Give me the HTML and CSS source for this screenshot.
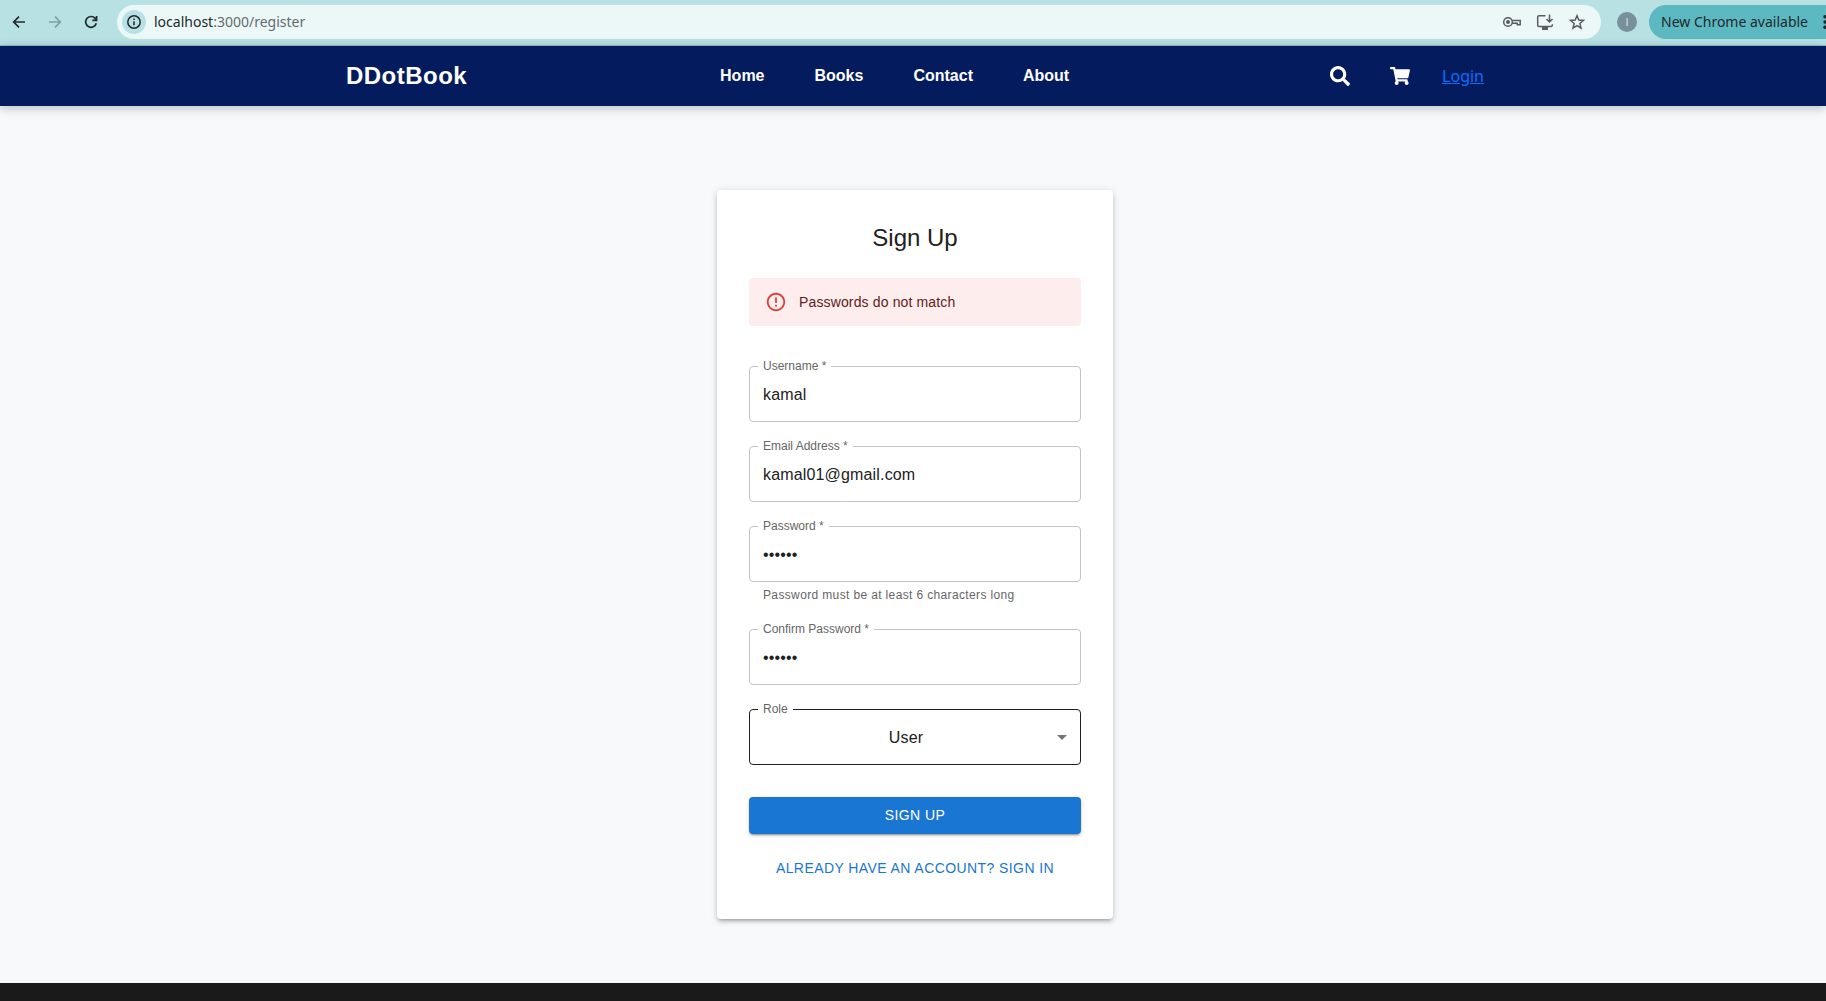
FILE: index.html
```html
<!DOCTYPE html>
<html lang="en">
<head>
<meta charset="utf-8">
<meta name="viewport" content="width=device-width, initial-scale=1">
<title>DDotBook - Sign Up</title>
<link rel="stylesheet" href="styles.css">
</head>
<body>
<div class="toolbar">
  <button class="tool" type="button" aria-label="Back"><svg viewBox="0 0 16 16"><path d="M14 8H3M8 2.700 2.700 8 8 13.300"/></svg></button>
  <button class="tool tool-off" type="button" aria-label="Forward" disabled><svg viewBox="0 0 16 16"><path d="M2 8h11M8 2.700 13.300 8 8 13.300"/></svg></button>
  <button class="tool" type="button" aria-label="Reload"><svg viewBox="0 0 16 16"><path d="M13.300 9.200A5.400 5.400 0 1 1 12 4.200L13.500 5.800M13.600 2v4.300H9.300"/></svg></button>
  <div class="omnibox">
    <button class="site-info" type="button" aria-label="View site information"><svg viewBox="0 0 16 16"><circle cx="8" cy="8" r="6.200"/><path d="M8 7.200v4M8 4.500v1.500"/></svg></button>
    <div class="address" role="textbox" aria-label="Address" tabindex="0">localhost<span class="address-path">:3000/register</span></div>
    <button class="omni-action" type="button" aria-label="Passwords"><svg class="key-icon" viewBox="0 0 20 16"><circle cx="6" cy="8" r="4.300"/><circle class="dot" cx="6" cy="8" r="2"/><path d="M10.200 6.500h8v4.200h-3V9.300h-5"/></svg></button>
    <button class="omni-action" type="button" aria-label="Install app"><svg viewBox="0 0 18 18"><path d="M9.500 2.700H3q-1.300 0-1.300 1.300v8.200q0 1.300 1.300 1.300h12q1.300 0 1.300-1.300v-1M13.500 1.500v7M10.500 6l3 3 3-3"/><path class="dot" d="M6 13.500h6V17H6z"/></svg></button>
    <button class="omni-action" type="button" aria-label="Bookmark"><svg viewBox="0 0 18 18"><path d="m9 2.700 1.800 4.300 4.700.4-3.600 3.100 1.100 4.600L9 12.600l-4 2.500 1.100-4.600-3.600-3.100 4.700-.4z"/></svg></button>
  </div>
  <button class="avatar" type="button">I</button>
  <button class="update" type="button"><span>New Chrome available</span><svg viewBox="0 0 4 16"><circle cx="2" cy="2" r="2"/><circle cx="2" cy="8" r="2"/><circle cx="2" cy="14" r="2"/></svg></button>
</div>

<header class="header">
  <div class="header-inner">
    <a class="logo" href="#">DDotBook</a>
    <nav class="nav">
      <a href="#">Home</a>
      <a href="#">Books</a>
      <a href="#">Contact</a>
      <a href="#">About</a>
    </nav>
    <div class="actions">
      <button class="icon-button" type="button" aria-label="Search"><svg viewBox="0 0 512 512"><path d="M505 442.700L405.300 343c-4.500-4.500-10.600-7-17-7H372c27.600-35.300 44-79.700 44-128C416 93.100 322.900 0 208 0S0 93.100 0 208s93.100 208 208 208c48.300 0 92.700-16.400 128-44v16.300c0 6.400 2.500 12.500 7 17l99.700 99.700c9.400 9.400 24.600 9.400 33.900 0l28.300-28.300c9.400-9.400 9.400-24.600.1-34zM208 336c-70.700 0-128-57.200-128-128 0-70.700 57.200-128 128-128 70.700 0 128 57.200 128 128 0 70.700-57.200 128-128 128z"/></svg></button>
      <button class="icon-button" type="button" aria-label="Cart"><svg viewBox="0 0 576 512"><path d="M528.120 301.319l47.273-208C578.806 78.301 567.391 64 551.990 64H159.208l-9.166-44.810C147.758 8.021 137.930 0 126.529 0H24C10.745 0 0 10.745 0 24v16c0 13.255 10.745 24 24 24h69.883l70.248 343.435C147.325 417.100 136 435.222 136 456c0 30.928 25.072 56 56 56s56-25.072 56-56c0-15.674-6.447-29.835-16.824-40h209.647C430.447 426.165 424 440.326 424 456c0 30.928 25.072 56 56 56s56-25.072 56-56c0-22.172-12.888-41.332-31.579-50.405l5.517-24.276c3.413-15.018-8.002-29.319-23.403-29.319H218.117l-6.545-32h293.145c11.206 0 20.920-7.754 23.403-18.681z"/></svg></button>
      <a class="login" href="#">Login</a>
    </div>
  </div>
</header>

<main class="page">
  <form class="card">
    <h1 class="title">Sign Up</h1>
    <div class="alert" role="alert">
      <svg viewBox="0 0 24 24"><path d="M11 15h2v2h-2zm0-8h2v6h-2zm.99-5C6.470 2 2 6.480 2 12s4.470 10 9.990 10C17.520 22 22 17.520 22 12S17.520 2 11.990 2zM12 20c-4.420 0-8-3.580-8-8s3.580-8 8-8 8 3.580 8 8-3.580 8-8 8z"/></svg>
      <span>Passwords do not match</span>
    </div>
    <div class="fields">
      <div class="field">
        <label for="username">Username *</label>
        <input id="username" type="text" value="kamal">
      </div>
      <div class="field">
        <label for="email">Email Address *</label>
        <input id="email" type="email" value="kamal01@gmail.com">
      </div>
      <div class="field">
        <label for="password">Password *</label>
        <input id="password" type="password" value="secret" aria-describedby="password-help">
        <p class="help" id="password-help">Password must be at least 6 characters long</p>
      </div>
      <div class="field">
        <label for="confirm">Confirm Password *</label>
        <input id="confirm" type="password" value="sesame">
      </div>
      <div class="field">
        <label for="role">Role</label>
        <select id="role"><option>User</option></select>
        <svg class="arrow" viewBox="0 0 24 24"><path d="M7 10l5 5 5-5z"/></svg>
      </div>
    </div>
    <button class="submit" type="submit">SIGN UP</button>
    <a class="signin" href="#">ALREADY HAVE AN ACCOUNT? SIGN IN</a>
  </form>
</main>
<footer class="footer"></footer>
</body>
</html>
```
FILE: styles.css
```css
* { box-sizing: border-box; }

body {
  margin: 0;
  min-height: 100vh;
  display: flex;
  flex-direction: column;
  overflow-x: hidden;
  background: #f8f9fb;
  color: #212121;
  font-family: "Liberation Sans", Arial, sans-serif;
}

button { border: 0; padding: 0; background: none; font: inherit; color: inherit; cursor: pointer; }
svg { display: block; }

/* Browser toolbar */
.toolbar {
  display: flex;
  align-items: center;
  height: 46px;
  padding: 0 0 2px 8px;
  overflow: hidden;
  background: #b8e1e4;
  border-bottom: 1px solid #92bfc3;
  font-family: "Noto Sans", sans-serif;
  font-size: 14px;
  color: #22282b;
}
.tool { flex: none; width: 22px; margin-right: 14px; }
.tool svg, .site-info svg { width: 16px; height: 16px; margin: 0 auto; }
.toolbar svg { fill: none; stroke: currentColor; stroke-width: 1.700; }
.toolbar .dot { fill: currentColor; stroke: none; }
.tool-off { color: #7e9fa3; }
.omnibox {
  flex: 1;
  display: flex;
  align-items: center;
  height: 34px;
  margin: 0 16px 0 1px;
  padding: 0 15px 0 5px;
  border-radius: 17px;
  background: #ecf8f8;
}
.site-info { width: 24px; height: 24px; border-radius: 50%; background: #b8e1e4; }
.toolbar .site-info svg { stroke-width: 1.500; }
.address { flex: 1; margin-left: 8px; }
.address-path { color: #646b6d; }
.omni-action { margin-left: 14px; color: #565d5f; }
.omni-action svg { width: 18px; height: 18px; stroke-width: 1.500; }
.omni-action .key-icon { width: 20px; height: 16px; }
.avatar {
  flex: none;
  width: 20px;
  height: 20px;
  margin-right: 12px;
  border-radius: 50%;
  background: #78909c;
  color: #dfe6e9;
  font-family: "Open Sans", sans-serif;
  font-size: 11px;
  line-height: 20px;
}
.update {
  flex: none;
  display: flex;
  align-items: center;
  justify-content: space-between;
  width: 178px;
  height: 34px;
  margin-right: -1px;
  padding-left: 12px;
  border-radius: 17px 0 0 17px;
  background: #5cb9c1;
  white-space: nowrap;
}
.update svg { width: 4px; height: 14px; fill: currentColor; stroke: none; }

/* Site header */
.header {
  position: relative;
  padding-left: 4px;
  background: #041b5d;
  box-shadow: 0 2px 10px rgba(0, 0, 0, 0.25);
}
.header-inner {
  display: flex;
  align-items: center;
  justify-content: space-between;
  max-width: 1138px;
  height: 60px;
  margin: 0 auto;
  color: #fff;
}
.logo { color: #fff; font-size: 24px; font-weight: 700; letter-spacing: 0.02em; text-decoration: none; }
.nav { display: flex; gap: 50px; }
.nav a { color: #fff; font-weight: 700; text-decoration: none; }
.actions { display: flex; align-items: center; gap: 24px; }
.icon-button { padding: 8px; }
.icon-button svg { width: 20px; height: 20px; fill: currentColor; }
.login { color: #0d6efd; font-family: "Noto Sans", sans-serif; font-size: 16px; }

/* Sign-up card */
.page { display: flex; justify-content: center; padding: 84px 0 64px 4px; }
.card {
  display: flex;
  flex-direction: column;
  width: 396px;
  padding: 32px;
  border-radius: 4px;
  background: #fff;
  box-shadow: 0 3px 3px -2px rgba(0, 0, 0, 0.2), 0 3px 4px rgba(0, 0, 0, 0.14), 0 1px 8px rgba(0, 0, 0, 0.12);
}
.title { margin: 0 0 24px; font-size: 24px; font-weight: 400; line-height: 32px; text-align: center; }
.alert {
  display: flex;
  align-items: center;
  gap: 12px;
  height: 48px;
  margin-bottom: 40px;
  padding: 0 16px;
  border-radius: 4px;
  background: #fdeded;
  color: #5f2120;
  font-size: 14px;
  letter-spacing: 0.01em;
}
.alert svg { width: 22px; height: 22px; fill: #d74343; }
.fields { display: flex; flex-direction: column; gap: 24px; margin-bottom: 32px; }
.field { position: relative; }
.field label {
  position: absolute;
  top: -8px;
  left: 9px;
  padding: 0 5px;
  background: #fff;
  color: #666;
  font-size: 12px;
  line-height: 16px;
}
.field input, .field select {
  display: block;
  width: 100%;
  height: 56px;
  padding: 2px 13px 0;
  border: 1px solid #c4c4c4;
  border-radius: 4px;
  background: #fff;
  color: #212121;
  font: 16px "Liberation Sans", Arial, sans-serif;
  letter-spacing: 0.01em;
}
.field select { appearance: none; padding: 0 31px 0 13px; border-color: #212121; text-align-last: center; }
.arrow { position: absolute; top: 16px; right: 7px; width: 24px; height: 24px; fill: #757575; pointer-events: none; }
.help { margin: 3px 13px 0 14px; color: #666; font-size: 12px; line-height: 20px; letter-spacing: 0.03em; }
.submit, .signin { height: 37px; border-radius: 4px; font-size: 14px; line-height: 37px; letter-spacing: 0.03em; text-align: center; }
.submit {
  margin-bottom: 16px;
  background: #1976d2;
  color: #fff;
  box-shadow: 0 3px 1px -2px rgba(0, 0, 0, 0.2), 0 2px 2px rgba(0, 0, 0, 0.14), 0 1px 5px rgba(0, 0, 0, 0.12);
}
.signin { color: #1976d2; text-decoration: none; }

.footer { flex: 1; background: #1a1a1a; }
```
